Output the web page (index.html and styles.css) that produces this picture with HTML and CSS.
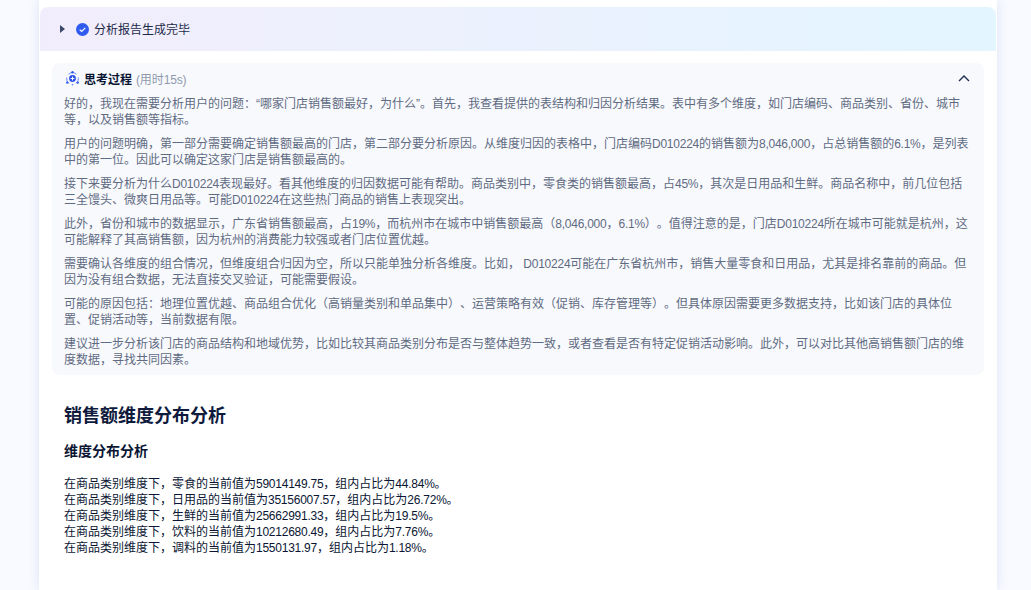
FILE: index.html
```html
<!DOCTYPE html>
<html lang="zh-CN">
<head>
<meta charset="utf-8">
<title>分析报告</title>
<link rel="stylesheet" href="styles.css">
</head>
<body>
<main class="card">
  <header class="status">
    <svg class="caret" width="5" height="8" viewBox="0 0 5 8"><path d="M0 0L5 4L0 8Z" fill="#3d4a6b"/></svg>
    <svg class="check" width="13" height="13" viewBox="0 0 13 13"><circle cx="6.5" cy="6.5" r="6.5" fill="#2f5bf0"/><path d="M3.7 6.6L5.7 8.5L9.3 4.9" fill="none" stroke="#fff" stroke-width="1.2"/></svg>
    <span class="status-text">分析报告生成完毕</span>
  </header>
  <section class="thinking">
    <div class="thinking-head">
      <svg class="spark" width="15" height="15" viewBox="0 0 15 15"><path d="M3.6 3.2A6 6 0 0 1 11.4 3.2M13.3 6.5A6 6 0 0 1 11 12.4M4 12.4A6 6 0 0 1 1.7 6.5" fill="none" stroke="#6d8df5" stroke-width="1"/><circle cx="7.5" cy="7.5" r="3.4" fill="#2a50e8"/><path d="M7.5 5.6V9.4M5.6 7.5H9.4" stroke="#fff" stroke-width="1"/><circle cx="7.5" cy="1.3" r="1.2" fill="#2f5bf0"/><circle cx="2.2" cy="11.6" r="1.2" fill="#2f5bf0"/><circle cx="12.8" cy="11.6" r="1.2" fill="#2f5bf0"/><circle cx="7.5" cy="13.6" r="0.9" fill="#6d8df5"/></svg>
      <strong class="thinking-title">思考过程</strong>
      <span class="thinking-time"><span class="num">(</span>用时<span class="num">15s)</span></span>
      <svg class="chevron" width="12" height="7" viewBox="0 0 12 7"><path d="M1 6L6 1L11 6" fill="none" stroke="#1c2d50" stroke-width="1.4"/></svg>
    </div>
    <div class="thinking-body">
      <p>好的，我现在需要分析用户的问题：“哪家门店销售额最好，为什么”。首先，我查看提供的表结构和归因分析结果。表中有多个维度，如门店编码、商品类别、省份、城市等，以及销售额等指标。</p>
      <p>用户的问题明确，第一部分需要确定销售额最高的门店，第二部分要分析原因。从维度归因的表格中，门店编码<span class="num">D010224</span>的销售额为<span class="num">8,046,000</span>，占总销售额的<span class="num">6.1%</span>，是列表中的第一位。因此可以确定这家门店是销售额最高的。</p>
      <p>接下来要分析为什么<span class="num">D010224</span>表现最好。看其他维度的归因数据可能有帮助。商品类别中，零食类的销售额最高，占<span class="num">45%</span>，其次是日用品和生鲜。商品名称中，前几位包括三全馒头、微爽日用品等。可能<span class="num">D010224</span>在这些热门商品的销售上表现突出。</p>
      <p>此外，省份和城市的数据显示，广东省销售额最高，占<span class="num">19%</span>，而杭州市在城市中销售额最高（<span class="num">8,046,000</span>，<span class="num">6.1%</span>）。值得注意的是，门店<span class="num">D010224</span>所在城市可能就是杭州，这可能解释了其高销售额，因为杭州的消费能力较强或者门店位置优越。</p>
      <p>需要确认各维度的组合情况，但维度组合归因为空，所以只能单独分析各维度。比如， <span class="num">D010224</span>可能在广东省杭州市，销售大量零食和日用品，尤其是排名靠前的商品。但因为没有组合数据，无法直接交叉验证，可能需要假设。</p>
      <p>可能的原因包括：地理位置优越、商品组合优化（高销量类别和单品集中）、运营策略有效（促销、库存管理等）。但具体原因需要更多数据支持，比如该门店的具体位置、促销活动等，当前数据有限。</p>
      <p>建议进一步分析该门店的商品结构和地域优势，比如比较其商品类别分布是否与整体趋势一致，或者查看是否有特定促销活动影响。此外，可以对比其他高销售额门店的维度数据，寻找共同因素。</p>
    </div>
  </section>
  <article class="report">
    <h1>销售额维度分布分析</h1>
    <h2>维度分布分析</h2>
    <p>在商品类别维度下，零食的当前值为<span class="num">59014149.75</span>，组内占比为<span class="num">44.84%</span>。<br>在商品类别维度下，日用品的当前值为<span class="num">35156007.57</span>，组内占比为<span class="num">26.72%</span>。<br>在商品类别维度下，生鲜的当前值为<span class="num">25662991.33</span>，组内占比为<span class="num">19.5%</span>。<br>在商品类别维度下，饮料的当前值为<span class="num">10212680.49</span>，组内占比为<span class="num">7.76%</span>。<br>在商品类别维度下，调料的当前值为<span class="num">1550131.97</span>，组内占比为<span class="num">1.18%</span>。</p>
  </article>
</main>
</body>
</html>
```
FILE: styles.css
```css
html, body {
  margin: 0;
  height: 100%;
  overflow: hidden;
}
body {
  background: #f8faff;
  font-family: "Liberation Sans", "Noto Sans CJK SC", sans-serif;
  font-size: 12px;
  color: #0f1b3d;
  text-spacing-trim: space-all;
}
.num {
  letter-spacing: -0.25px;
}
.card {
  box-sizing: border-box;
  width: 958px;
  height: 590px;
  margin-left: 39px;
  padding: 7px 1px 0;
  background: #fff;
  box-shadow: 0 0 10px rgba(100, 120, 190, 0.16);
}
.status {
  display: flex;
  align-items: center;
  height: 44px;
  padding-left: 20px;
  border-radius: 8px 8px 0 0;
  background: linear-gradient(90deg, #f2edfc 0%, #e3f5ff 100%);
}
.check {
  margin-left: 11px;
  margin-right: 5px;
}
.status-text {
  margin-top: -1px;
  color: #1c2a4a;
}
.thinking {
  margin: 12px 12px 0;
  padding: 7px 12px 8px;
  height: 297px;
  border-radius: 8px;
  background: #f8f9fd;
}
.thinking-head {
  display: flex;
  align-items: center;
  height: 17px;
  padding-left: 1px;
}
.spark {
  margin-right: 4px;
}
.thinking-title {
  color: #0a1633;
  font-weight: 700;
}
.thinking-time {
  margin-left: 4px;
  color: #8e99ad;
}
.chevron {
  margin-left: auto;
  margin-right: 2px;
}
.thinking-body {
  margin-top: 9px;
}
.thinking-body p {
  margin: 0 0 8px;
  line-height: 16px;
  color: #5f6b82;
}
.report {
  padding: 0 24px;
}
.report h1 {
  margin: 28px 0 0;
  font-size: 18px;
  line-height: 26px;
  font-weight: 700;
  color: #0f1b3d;
}
.report h2 {
  margin: 12px 0 0;
  font-size: 14px;
  line-height: 20px;
  font-weight: 700;
  color: #0a1633;
}
.report p {
  margin: 15px 0 0;
  line-height: 16px;
  color: #0a1633;
}
```
